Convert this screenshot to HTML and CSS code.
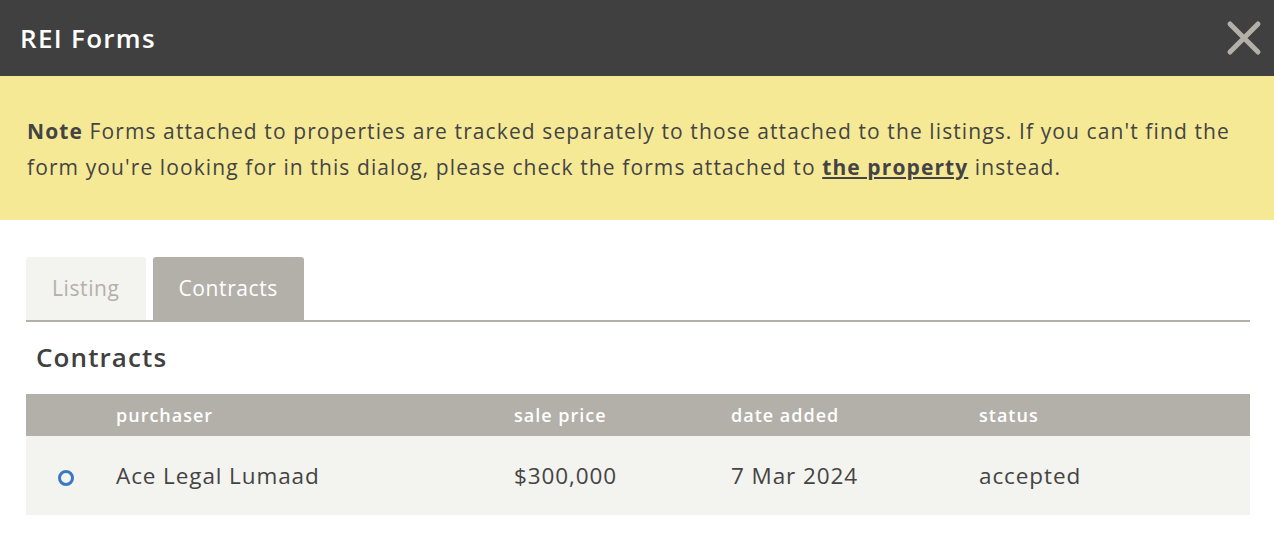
FILE: index.html
```html
<!DOCTYPE html>
<html lang="en">
<head>
  <meta charset="UTF-8">
  <meta name="viewport" content="width=device-width, initial-scale=1.0">
  <title>REI Forms</title>
  <link rel="stylesheet" href="styles.css">
</head>
<body>
  <div class="dialog">
    <div class="dialog-header">
      <h1>REI Forms</h1>
      <button class="close" aria-label="Close">
        <svg width="36" height="36" viewBox="0 0 36 36">
          <path d="M4 4 L32 32 M32 4 L4 32" stroke="#b3b0aa" stroke-width="5" stroke-linecap="round"/>
        </svg>
      </button>
    </div>

    <div class="note">
      <p><strong>Note</strong> Forms attached to properties are tracked separately to those attached to the listings. If you can't find the form you're looking for in this dialog, please check the forms attached to <a href="#">the property</a> instead.</p>
    </div>

    <div class="content">
      <div class="tabs">
        <div class="tab">Listing</div>
        <div class="tab active">Contracts</div>
      </div>

      <h2>Contracts</h2>

      <table class="contracts">
        <thead>
          <tr>
            <th class="col-select"></th>
            <th class="col-purchaser">purchaser</th>
            <th class="col-price">sale price</th>
            <th class="col-date">date added</th>
            <th>status</th>
          </tr>
        </thead>
        <tbody>
          <tr>
            <td class="col-select"><span class="radio"></span></td>
            <td>Ace Legal Lumaad</td>
            <td>$300,000</td>
            <td>7 Mar 2024</td>
            <td>accepted</td>
          </tr>
        </tbody>
      </table>
    </div>
  </div>
</body>
</html>
```

FILE: styles.css
```css
body {
  margin: 0;
  font-family: "Open Sans", "Lato", sans-serif;
  color: #444;
  background: #fff;
}
.dialog-header {
  background: #404040;
  height: 76px;
  display: flex;
  align-items: center;
  justify-content: space-between;
  padding: 0 12px 0 20px;
}
.dialog-header h1 {
  margin: 0;
  color: #fff;
  font-size: 26px;
  font-weight: 600;
  letter-spacing: 1.3px;
}
.close {
  background: none;
  border: 0;
  padding: 0;
  display: flex;
}
.note {
  background: #f6e996;
  padding: 37px 27px 35px;
}
.note p {
  margin: 0;
  font-size: 21px;
  line-height: 36px;
  letter-spacing: 1.1px;
}
.note strong {
  font-weight: 700;
}
.note a {
  color: #444;
  font-weight: 700;
}
.content {
  padding: 37px 24px 0 26px;
}
.tabs {
  display: flex;
  gap: 7px;
  border-bottom: 2px solid #b3b0aa;
}
.tab {
  height: 63px;
  line-height: 63px;
  padding: 0 26px;
  font-size: 21px;
  letter-spacing: 0.6px;
  background: #f3f3ef;
  color: #b3b0aa;
  border-radius: 3px 3px 0 0;
}
.tab.active {
  background: #b3b0aa;
  color: #fff;
}
h2 {
  margin: 19px 0 0 10px;
  font-size: 26px;
  font-weight: 600;
  letter-spacing: 1.1px;
  color: #404040;
  line-height: 32px;
}
.contracts {
  margin-top: 21px;
  width: 100%;
  border-collapse: collapse;
}
.contracts th {
  background: #b3b0aa;
  color: #fff;
  text-align: left;
  font-weight: 600;
  font-size: 18px;
  letter-spacing: 1px;
  height: 42px;
  padding: 0;
}
.contracts td {
  background: #f3f3ef;
  font-size: 22.5px;
  letter-spacing: 0.9px;
  height: 79px;
  padding: 0;
}
.col-select {
  width: 90px;
  text-align: center;
}
.col-purchaser {
  width: 398px;
}
.col-price {
  width: 217px;
}
.col-date {
  width: 248px;
}
.radio {
  display: inline-block;
  width: 10px;
  height: 10px;
  border: 3px solid #3a78c3;
  border-radius: 50%;
  vertical-align: middle;
  margin-left: -10px;
}
```
